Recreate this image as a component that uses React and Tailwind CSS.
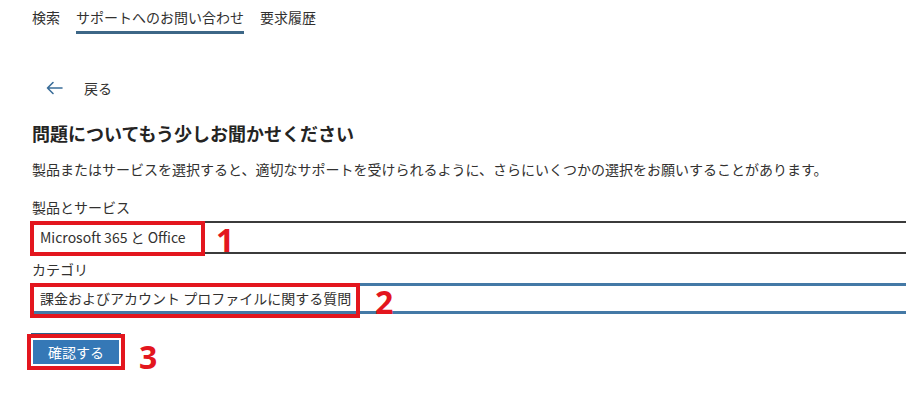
import React from "react";

const jp = { fontFamily: '"Segoe UI", "Noto Sans CJK JP", "Noto Sans", sans-serif' };
const num = { fontFamily: '"Noto Sans", "Open Sans", sans-serif' };

export default function App() {
  return (
    <div className="w-[906px] h-[406px] bg-white text-[#323130] overflow-hidden" style={jp}>
      {/* Tabs */}
      <div className="flex pl-[32px] gap-[16px] h-[34px] text-[14px] leading-[20px]">
        <div className="pt-[7px]">検索</div>
        <div className="pt-[7px] border-b-[3px] border-[#3d6787]">サポートへのお問い合わせ</div>
        <div className="pt-[7px]">要求履歴</div>
      </div>

      {/* Back */}
      <div className="mt-[44px] flex items-center h-[20px] pl-[46px] text-[14px]">
        <svg width="17" height="14" viewBox="0 0 17 14" fill="none" stroke="#3a6d99" strokeWidth="1.6" strokeLinecap="round" strokeLinejoin="round">
          <path d="M16 7H1.5M7 1.5L1.5 7L7 12.5" />
        </svg>
        <span className="ml-[21px]">戻る</span>
      </div>

      <div className="pl-[32px]">
        <h1 className="mt-[23px] text-[18px] leading-[24px] font-bold text-[#252423]">問題についてもう少しお聞かせください</h1>
        <p className="mt-[14px] text-[14px] leading-[20px]">
          製品またはサービスを選択すると、適切なサポートを受けられるように、さらにいくつかの選択をお願いすることがあります。
        </p>
        <div className="mt-[18px] text-[14px] leading-[20px]">製品とサービス</div>
      </div>

      {/* Input 1 */}
      <div className="relative mt-[4px] ml-[30px] h-[33px] border-y-2 border-[#3b3b3b] flex items-center pl-[10px] text-[14px]">
        <span>Microsoft 365 と Office</span>
        <div className="absolute left-0 top-[-2px] w-[175px] h-[35px] border-[4px] border-[#e3161e]" />
        <span className="absolute left-[186px] top-[-1px] text-[32px] leading-[36px] font-bold text-[#e3161e]" style={num}>1</span>
      </div>

      <div className="pl-[32px] mt-[5px] text-[14px] leading-[20px]">カテゴリ</div>

      {/* Input 2 */}
      <div className="relative mt-[4px] ml-[30px] h-[31px] border-y-[3px] border-[#4479a6] flex items-center pl-[10px] text-[14px]">
        <span>課金およびアカウント プロファイルに関する質問</span>
        <div className="absolute left-0 top-[-3px] w-[330px] h-[35px] border-[4px] border-[#e3161e]" />
        <span className="absolute left-[345px] top-[-2px] text-[32px] leading-[36px] font-bold text-[#e3161e]" style={num}>2</span>
      </div>

      {/* Button */}
      <div className="mt-[19px] ml-[27px] flex items-start">
        <div className="flex flex-col">
          <div className="ml-[4px] w-[90px] h-[1px] bg-[#2d5f8a]" />
          <div className="border-[4px] border-[#e3161e] w-[98px] h-[36px] p-[2px]">
            <div className="w-full h-full bg-[#3578b6] text-white text-[14px] flex items-center justify-center">確認する</div>
          </div>
        </div>
        <span className="ml-[14px] mt-[6px] text-[32px] leading-[36px] font-bold text-[#e3161e]" style={num}>3</span>
      </div>
    </div>
  );
}
